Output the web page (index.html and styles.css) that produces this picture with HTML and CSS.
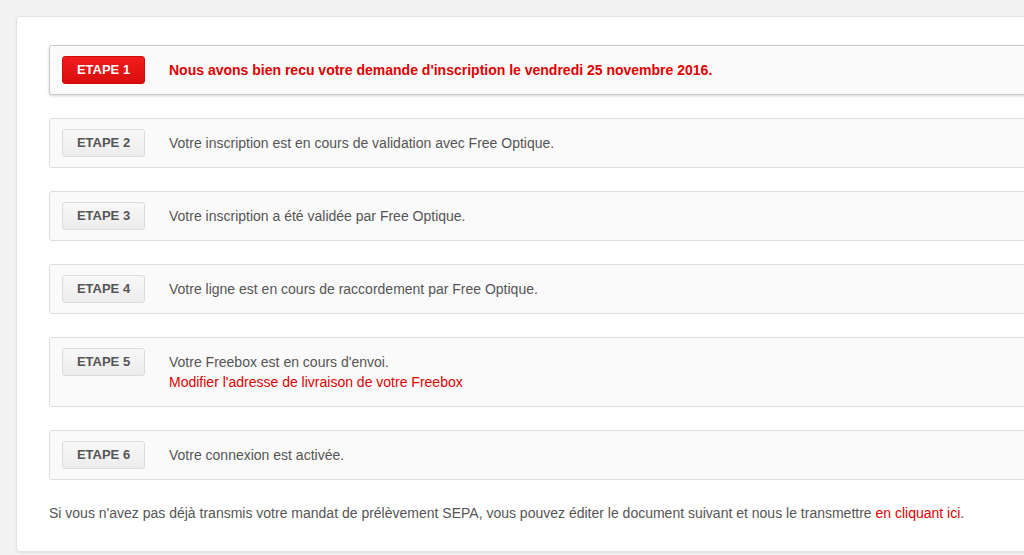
FILE: index.html
```
<!DOCTYPE html>
<html lang="fr">
<head>
<meta charset="utf-8">
<title>Suivi d'inscription</title>
<link rel="stylesheet" href="styles.css">
</head>
<body>
<div class="card">
  <div class="steps">
    <div class="step current">
      <span class="badge">ETAPE 1</span>
      <div class="text">Nous avons bien recu votre demande d'inscription le vendredi 25 novembre 2016.</div>
    </div>
    <div class="step">
      <span class="badge">ETAPE 2</span>
      <div class="text">Votre inscription est en cours de validation avec Free Optique.</div>
    </div>
    <div class="step">
      <span class="badge">ETAPE 3</span>
      <div class="text">Votre inscription a été validée par Free Optique.</div>
    </div>
    <div class="step">
      <span class="badge">ETAPE 4</span>
      <div class="text">Votre ligne est en cours de raccordement par Free Optique.</div>
    </div>
    <div class="step">
      <span class="badge">ETAPE 5</span>
      <div class="text">Votre Freebox est en cours d'envoi.<br><a class="link" href="#">Modifier l'adresse de livraison de votre Freebox</a></div>
    </div>
    <div class="step">
      <span class="badge">ETAPE 6</span>
      <div class="text">Votre connexion est activée.</div>
    </div>
  </div>
  <p class="note">Si vous n'avez pas déjà transmis votre mandat de prélèvement SEPA, vous pouvez éditer le document suivant et nous le transmettre <a class="link" href="#">en cliquant ici</a>.</p>
</div>
</body>
</html>
```
FILE: styles.css
```
html, body {
  margin: 0;
  padding: 0;
}
body {
  background: #f2f2f2;
  font-family: "Liberation Sans", Arial, sans-serif;
  font-size: 14px;
  color: #555;
  overflow: hidden;
  width: 1024px;
  height: 555px;
}
.card {
  margin: 16px 0 0 16px;
  width: 1080px;
  box-sizing: border-box;
  background: #fff;
  border: 1px solid #e2e2e2;
  border-radius: 4px;
  box-shadow: 0 1px 2px rgba(0,0,0,0.08);
  padding: 28px 32px 28px 32px;
}
.steps {
  display: flex;
  flex-direction: column;
  gap: 23px;
}
.step {
  display: flex;
  align-items: flex-start;
  gap: 24px;
  background: #fafafa;
  border: 1px solid #dddddd;
  border-radius: 3px;
  padding: 10px 12px;
}
.step.current {
  border-color: #cacaca;
  box-shadow: 0 1px 3px rgba(0,0,0,0.18);
}
.badge {
  flex: none;
  box-sizing: border-box;
  width: 83px;
  height: 28px;
  line-height: 26px;
  text-align: center;
  font-weight: bold;
  font-size: 13px;
  color: #555;
  border: 1px solid #dcdcdc;
  border-radius: 3px;
  background: linear-gradient(#f8f8f8, #ececec);
}
.current .badge {
  color: #fff;
  border-color: #cf0b0b;
  background: linear-gradient(#f21c1c, #d90d0d);
}
.text {
  line-height: 20px;
  padding: 4px 0 4px 0;
}
.current .text {
  color: #e00000;
  font-weight: bold;
}
.link {
  color: #e00000;
  text-decoration: none;
}
.note {
  margin: 23px 0 0 0;
  line-height: 20px;
}
```
